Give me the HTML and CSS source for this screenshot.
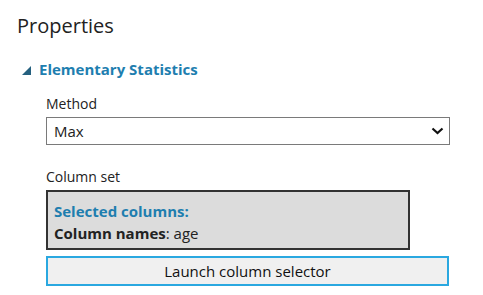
FILE: index.html
```html
<!DOCTYPE html>
<html>
<head>
  <meta charset="UTF-8">
  <title>Properties</title>
  <link rel="stylesheet" href="styles.css">
</head>
<body>
  <h1 class="title">Properties</h1>
  <div class="section">
    <div class="section-head">
      <svg class="caret" width="9" height="9" viewBox="0 0 9 9"><polygon points="9,0 9,9 0,9" fill="#25607f"/></svg>
      <span>Elementary Statistics</span>
    </div>
    <div class="field">
      <label class="label">Method</label>
      <div class="select">
        <span>Max</span>
        <svg class="chevron" width="13" height="8" viewBox="0 0 13 8"><polyline points="1.5,1.5 6.5,6 11.5,1.5" fill="none" stroke="#111" stroke-width="2.2"/></svg>
      </div>
    </div>
    <div class="field">
      <label class="label">Column set</label>
      <div class="colbox">
        <div class="colbox-title">Selected columns:</div>
        <div><b>Column names</b>: age</div>
      </div>
      <button class="launch">Launch column selector</button>
    </div>
  </div>
</body>
</html>
```

FILE: styles.css
```css
*{
  box-sizing:border-box;
}

body{
  margin:0;
  padding:13px 0 0 17px;
  font-family:"Open Sans", sans-serif;
  color:#222;
  background:#fff;
}

.title{
  margin:0;
  font-size:20px;
  font-weight:400;
  line-height:26px;
}

.section{
  margin-top:20px;
}
.section-head{
  display:flex;
  align-items:center;
  gap:8px;
  padding-left:5px;
  color:#1e7eaf;
  font-weight:700;
  font-size:15px;
  line-height:20px;
}
.caret{
  margin-top:2px;
}

.field{
  margin-left:29px;
  width:404px;
}
.label{
  display:block;
  margin-top:15px;
  font-size:14px;
  line-height:20px;
}
.select{
  margin-top:3px;
  height:28px;
  border:1px solid #7a7a7a;
  display:flex;
  align-items:center;
  justify-content:space-between;
  padding:0 5px 0 7px;
  font-size:15px;
}

.field + .field .label{
  margin-top:22px;
}

.colbox{
  margin-top:3px;
  width:364px;
  height:60px;
  border:2px solid #333;
  background:#dcdcdc;
  padding:8px 6px 0;
  font-size:15px;
  line-height:22px;
}
.colbox-title{
  color:#1e7eaf;
  font-weight:700;
}

.launch{
  display:block;
  margin-top:6px;
  width:403px;
  height:30px;
  border:2px solid #2aa8e0;
  background:#f0f0f0;
  font-family:inherit;
  font-size:15px;
  color:#111;
  padding:0;
}
```
